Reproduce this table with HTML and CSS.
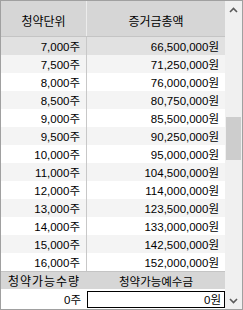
FILE: index.html
```html
<!DOCTYPE html>
<html lang="ko">
<head>
<meta charset="utf-8">
<link rel="stylesheet" href="styles.css">
</head>
<body>
<div class="grid">
  <div class="main">
    <div class="head">
      <div class="c1">청약단위</div>
      <div class="c2">증거금총액</div>
    </div>
    <div class="body">
      <div class="row sel"><div class="c1">7,000주</div><div class="c2">66,500,000원</div></div>
      <div class="row alt"><div class="c1">7,500주</div><div class="c2">71,250,000원</div></div>
      <div class="row"><div class="c1">8,000주</div><div class="c2">76,000,000원</div></div>
      <div class="row alt"><div class="c1">8,500주</div><div class="c2">80,750,000원</div></div>
      <div class="row"><div class="c1">9,000주</div><div class="c2">85,500,000원</div></div>
      <div class="row alt"><div class="c1">9,500주</div><div class="c2">90,250,000원</div></div>
      <div class="row"><div class="c1">10,000주</div><div class="c2">95,000,000원</div></div>
      <div class="row alt"><div class="c1">11,000주</div><div class="c2">104,500,000원</div></div>
      <div class="row"><div class="c1">12,000주</div><div class="c2">114,000,000원</div></div>
      <div class="row alt"><div class="c1">13,000주</div><div class="c2">123,500,000원</div></div>
      <div class="row"><div class="c1">14,000주</div><div class="c2">133,000,000원</div></div>
      <div class="row alt"><div class="c1">15,000주</div><div class="c2">142,500,000원</div></div>
      <div class="row"><div class="c1">16,000주</div><div class="c2">152,000,000원</div></div>
    </div>
    <div class="foot-head">
      <div class="c1 wide">청약가능수량</div>
      <div class="c2">청약가능예수금</div>
    </div>
    <div class="foot-val">
      <div class="c1">0주</div>
      <div class="c2"><div class="box">0원</div></div>
    </div>
  </div>
  <div class="scroll">
    <div class="btn"><svg width="9" height="6" viewBox="0 0 9 6"><polyline points="1,5 4.5,1.5 8,5" fill="none" stroke="#5a5a5a" stroke-width="1.6"/></svg></div>
    <div class="track"><div class="thumb"></div></div>
    <div class="btn"><svg width="9" height="6" viewBox="0 0 9 6"><polyline points="1,1 4.5,4.5 8,1" fill="none" stroke="#5a5a5a" stroke-width="1.6"/></svg></div>
  </div>
</div>
</body>
</html>
```
FILE: styles.css
```css
html, body {
  margin: 0;
  padding: 0;
  background: #ffffff;
}
body {
  font-family: "Liberation Sans", "Noto Sans CJK KR", sans-serif;
  font-size: 11.5px;
  color: #000;
}
.grid {
  box-sizing: border-box;
  width: 243px;
  height: 310px;
  border: 1px solid #a0a0a0;
  display: flex;
}
.main {
  width: 224px;
  display: flex;
  flex-direction: column;
}
.head {
  height: 35px;
  display: flex;
  background: #d6d6d6;
  font-family: "Noto Sans CJK KR", sans-serif;
  font-size: 12px;
}
.head .c1, .head .c2 {
  display: flex;
  align-items: center;
  justify-content: center;
  padding-top: 3px;
  box-sizing: border-box;
}
.head .c1 {
  width: 86px;
  border-right: 1px solid #ececec;
}
.head .c2 {
  flex: 1;
}
.body {
  display: flex;
  flex-direction: column;
  border-top: 1px solid #c4c4c4;
}
.row {
  height: 18px;
  display: flex;
  background: #ffffff;
}
.row.alt {
  background: #f4f4f4;
}
.row.sel {
  background: #e1e1e1;
}
.row .c1, .row .c2, .foot-val .c1 {
  display: flex;
  align-items: center;
  justify-content: flex-end;
  box-sizing: border-box;
}
.row .c1 {
  width: 86px;
  padding-right: 6px;
  border-right: 1px solid #c8c8c8;
}
.row .c2 {
  flex: 1;
  padding-right: 6px;
}
.foot-head {
  height: 17px;
  display: flex;
  background: #d6d6d6;
  border-top: 1px solid #c4c4c4;
  font-family: "Noto Sans CJK KR", sans-serif;
  font-size: 12px;
}
.foot-head .c1, .foot-head .c2 {
  display: flex;
  align-items: center;
  justify-content: center;
}
.foot-head .c1 {
  width: 86px;
}
.foot-head .c1.wide {
  letter-spacing: 1px;
}
.foot-head .c2 {
  flex: 1;
  font-size: 11.5px;
}
.foot-val {
  flex: 1;
  display: flex;
  align-items: center;
}
.foot-val .c1 {
  width: 86px;
  padding-right: 6px;
}
.foot-val .c2 {
  flex: 1;
  height: 100%;
  display: flex;
  align-items: center;
}
.box {
  box-sizing: border-box;
  width: 100%;
  height: 17px;
  border: 1px solid #000;
  background: #fff;
  display: flex;
  align-items: center;
  justify-content: flex-end;
  padding-right: 3px;
}
.scroll {
  flex: 1;
  display: flex;
  flex-direction: column;
  background: #f0f0f0;
}
.btn {
  height: 17px;
  display: flex;
  align-items: center;
  justify-content: center;
}
.track {
  flex: 1;
  padding: 0 1px;
}
.thumb {
  margin-top: 99px;
  height: 43px;
  background: #cdcdcd;
}
```
